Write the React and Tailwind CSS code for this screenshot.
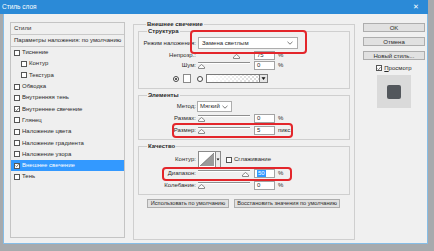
import React from "react";

const styles = [
  { name: "Тиснение" },
  { name: "Контур", indent: true },
  { name: "Текстура", indent: true },
  { name: "Обводка" },
  { name: "Внутренняя тень" },
  { name: "Внутреннее свечение", checked: true },
  { name: "Глянец" },
  { name: "Наложение цвета" },
  { name: "Наложение градиента" },
  { name: "Наложение узора" },
  { name: "Внешнее свечение", checked: true, active: true },
  { name: "Тень" },
];

function Check({ checked }) {
  return (
    <span className="w-[6px] h-[6px] border border-[#555] bg-white flex items-center justify-center shrink-0">
      {checked && (
        <svg width="5" height="5" viewBox="0 0 5 5">
          <path d="M0.6 2.6 L2 4 L4.5 0.8" fill="none" stroke="#333" strokeWidth="0.8" />
        </svg>
      )}
    </span>
  );
}

function Slider({ pos }) {
  return (
    <div className="relative w-[52px] h-[9px] shrink-0">
      <div className="mt-[1px] h-[2px] border-t border-[#8e8e8e] border-b border-b-white bg-[#d6d6d6]" />
      <svg
        className="absolute top-[3px]"
        style={{ left: `${pos * 46}px` }}
        width="7"
        height="5"
        viewBox="0 0 7 5"
      >
        <path d="M3.5 0.5 L6.5 3 L6.5 4.5 L0.5 4.5 L0.5 3 Z" fill="#fafafa" stroke="#707070" strokeWidth="0.8" />
      </svg>
    </div>
  );
}

function Field({ value, selected }) {
  return (
    <div className="w-[21px] h-[9px] bg-white border border-[#a3a3a3] flex items-center pl-[2px] shrink-0">
      {selected ? (
        <span className="bg-[#3399ff] text-white px-[1px] leading-[7px]">{value}</span>
      ) : (
        <span>{value}</span>
      )}
    </div>
  );
}

function SliderRow({ label, pos, value, unit, selected, className }) {
  return (
    <div className={`flex items-center h-[9px] ${className}`}>
      <span className="w-[57px] text-right mr-[2px] shrink-0">{label}</span>
      <Slider pos={pos} />
      <div className="ml-[4px]">
        <Field value={value} selected={selected} />
      </div>
      <span className="ml-[3px]">{unit}</span>
    </div>
  );
}

function Chevron() {
  return (
    <svg width="6" height="4" viewBox="0 0 6 4">
      <path d="M0.5 0.8 L3 3.2 L5.5 0.8" fill="none" stroke="#444" strokeWidth="0.7" />
    </svg>
  );
}

function Group({ title, bold, className, children }) {
  return (
    <fieldset className={`border border-[#cfcfcf] ${className}`}>
      <legend className={`ml-[8px] px-[1px] leading-[7px] ${bold ? "font-bold" : ""}`}>{title}</legend>
      {children}
    </fieldset>
  );
}

function Button({ children, className }) {
  return (
    <div
      className={`h-[9px] bg-[#e1e1e1] border border-[#adadad] flex items-center justify-center leading-none whitespace-nowrap ${className}`}
    >
      {children}
    </div>
  );
}

export default function App() {
  return (
    <div className="w-[434px] h-[251px] bg-[#a7aaad] overflow-hidden font-['Liberation_Sans',Arial,sans-serif] text-[6px] text-[#2a2a2a] whitespace-nowrap">
      {/* title bar */}
      <div className="w-[428px] h-[14px] bg-[#2b8ad7] flex items-center justify-between pl-[2px] pr-[9px] text-white">
        <span className="text-[6.5px]">Стиль слоя</span>
        <span className="text-[7px]">✕</span>
      </div>

      <div className="relative ml-[3px] w-[425px] h-[230px] bg-[#f0f0f0] border border-t-0 border-[#86bde6] flex">
        {/* LEFT: styles list */}
        <div className="ml-[6px] mt-[8px] w-[115px] h-[216px] border border-[#c4c4c4] bg-[#efefef] flex flex-col">
          <div className="h-[12px] border-b border-[#c9c9c9] flex items-center pl-[3px]">Стили</div>
          <div className="h-[12px] border-b border-[#c9c9c9] flex items-center pl-[3px]">
            Параметры наложения: по умолчанию
          </div>
          {styles.map((s) => (
            <div
              key={s.name}
              className={`h-[11.3px] flex items-center gap-[2px] ${s.indent ? "pl-[10px]" : "pl-[3px]"} ${
                s.active ? "bg-[#3399ff] text-white" : ""
              }`}
            >
              <Check checked={s.checked} />
              <span>{s.name}</span>
            </div>
          ))}
        </div>

        {/* MIDDLE: outer glow settings */}
        <div className="ml-[8px] mt-[7px] flex flex-col">
          <Group title="Внешнее свечение" bold className="w-[221px] h-[219px] px-[4px]">
            <Group title="Структура" bold className="w-[212px] h-[61px]">
              <div className="flex items-center h-[12px] mt-[2px]">
                <span className="w-[57px] text-right mr-[2px] shrink-0">Режим наложения:</span>
                <div className="w-[100px] h-[12px] bg-white border border-[#adadad] flex items-center justify-between pl-[3px] pr-[4px]">
                  <span>Замена светлым</span>
                  <Chevron />
                </div>
              </div>
              <SliderRow label="Непрозр.:" pos={0.75} value="75" unit="%" className="mt-[2px]" />
              <SliderRow label="Шум:" pos={0} value="0" unit="%" className="mt-[1px]" />
              <div className="flex items-center h-[9px] mt-[4px] ml-[34px]">
                <span className="w-[6px] h-[6px] rounded-full border border-[#444] bg-white flex items-center justify-center">
                  <span className="w-[2px] h-[2px] rounded-full bg-[#222]" />
                </span>
                <span className="ml-[4px] w-[8px] h-[9px] bg-white border border-[#8a8a8a]" />
                <span className="ml-[6px] w-[6px] h-[6px] rounded-full border border-[#444] bg-white" />
                <svg className="ml-[3px]" width="62" height="9" viewBox="0 0 62 9">
                  <defs>
                    <pattern id="chk" width="4" height="4" patternUnits="userSpaceOnUse">
                      <rect width="4" height="4" fill="#fff" />
                      <rect width="2" height="2" fill="#d8d8d8" />
                      <rect x="2" y="2" width="2" height="2" fill="#d8d8d8" />
                    </pattern>
                    <linearGradient id="fade" x1="0" x2="1">
                      <stop offset="0" stopColor="#fff" stopOpacity="1" />
                      <stop offset="1" stopColor="#fff" stopOpacity="0" />
                    </linearGradient>
                  </defs>
                  <rect x="0.5" y="0.5" width="61" height="8" fill="url(#chk)" stroke="#7a7a7a" />
                  <rect x="1" y="1" width="52" height="7" fill="url(#fade)" />
                  <rect x="53.5" y="0.5" width="8" height="8" fill="#e6e6e6" stroke="#7a7a7a" />
                  <path d="M55.5 3.2 L59.5 3.2 L57.5 6 Z" fill="#111" />
                </svg>
              </div>
            </Group>

            <Group title="Элементы" bold className="w-[212px] h-[48px] mt-[3px]">
              <div className="flex items-center h-[11px] mt-[2px]">
                <span className="w-[57px] text-right mr-[1px] shrink-0">Метод:</span>
                <div className="w-[35px] h-[11px] bg-white border border-[#adadad] flex items-center justify-between pl-[2px] pr-[3px]">
                  <span>Мягкий</span>
                  <Chevron />
                </div>
              </div>
              <SliderRow label="Размах:" pos={0} value="0" unit="%" className="mt-[2px]" />
              <SliderRow label="Размер:" pos={0} value="5" unit="пикс." className="mt-[3px]" />
            </Group>

            <Group title="Качество" bold className="w-[212px] h-[52px] mt-[3px]">
              <div className="flex items-center h-[17px] mt-[1px]">
                <span className="w-[57px] text-right mr-[2px] shrink-0">Контур:</span>
                <svg width="23" height="17" viewBox="0 0 23 17">
                  <rect x="0.5" y="0.5" width="17" height="16" fill="#fff" stroke="#8a8a8a" />
                  <path d="M2 15 L16 2 L16 15 Z" fill="#9a9a9a" />
                  <path d="M2 15 L16 2" stroke="#555" strokeWidth="0.6" />
                  <rect x="17.5" y="0.5" width="5" height="16" fill="#ececec" stroke="#8a8a8a" />
                  <path d="M18.6 7.5 L21.4 7.5 L20 9.5 Z" fill="#111" />
                </svg>
                <span className="ml-[5px]">
                  <Check />
                </span>
                <span className="ml-[2px]">Сглаживание</span>
              </div>
              <SliderRow label="Диапазон:" pos={0.96} value="50" unit="%" selected className="mt-[1px]" />
              <SliderRow label="Колебание:" pos={0} value="0" unit="%" className="mt-[3px]" />
            </Group>

            <div className="flex mt-[4px] ml-[9px] gap-[5px] text-[5.6px]">
              <Button className="w-[82px]">Использовать по умолчанию</Button>
              <Button className="w-[106px]">Восстановить значения по умолчанию</Button>
            </div>
          </Group>
        </div>

        {/* RIGHT: buttons + preview */}
        <div className="ml-[8px] mt-[9px] w-[62px] flex flex-col">
          <Button className="border-[#3c7fb1]">OK</Button>
          <Button className="mt-[5px]">Отмена</Button>
          <Button className="mt-[5px]">Новый стиль...</Button>
          <div className="mt-[4px] h-[8px] flex items-center justify-center gap-[2px]">
            <Check checked />
            <span>
              <span className="underline">П</span>росмотр
            </span>
          </div>
          <div className="mt-[3px] mx-auto w-[34px] h-[33px] bg-[#dadada] flex items-center justify-center">
            <div className="w-[14px] h-[14px] rounded-[2px] bg-[#53575c]" />
          </div>
        </div>

        {/* red annotation frames */}
        <div className="absolute left-[186px] top-[16px] w-[117px] h-[24px] border-2 border-[#e3262b] rounded-[4px]" />
        <div className="absolute left-[168px] top-[109px] w-[121px] h-[15px] border-2 border-[#e3262b] rounded-[4px]" />
        <div className="absolute left-[158px] top-[153px] w-[130px] h-[14px] border-2 border-[#e3262b] rounded-[4px]" />
      </div>
    </div>
  );
}
